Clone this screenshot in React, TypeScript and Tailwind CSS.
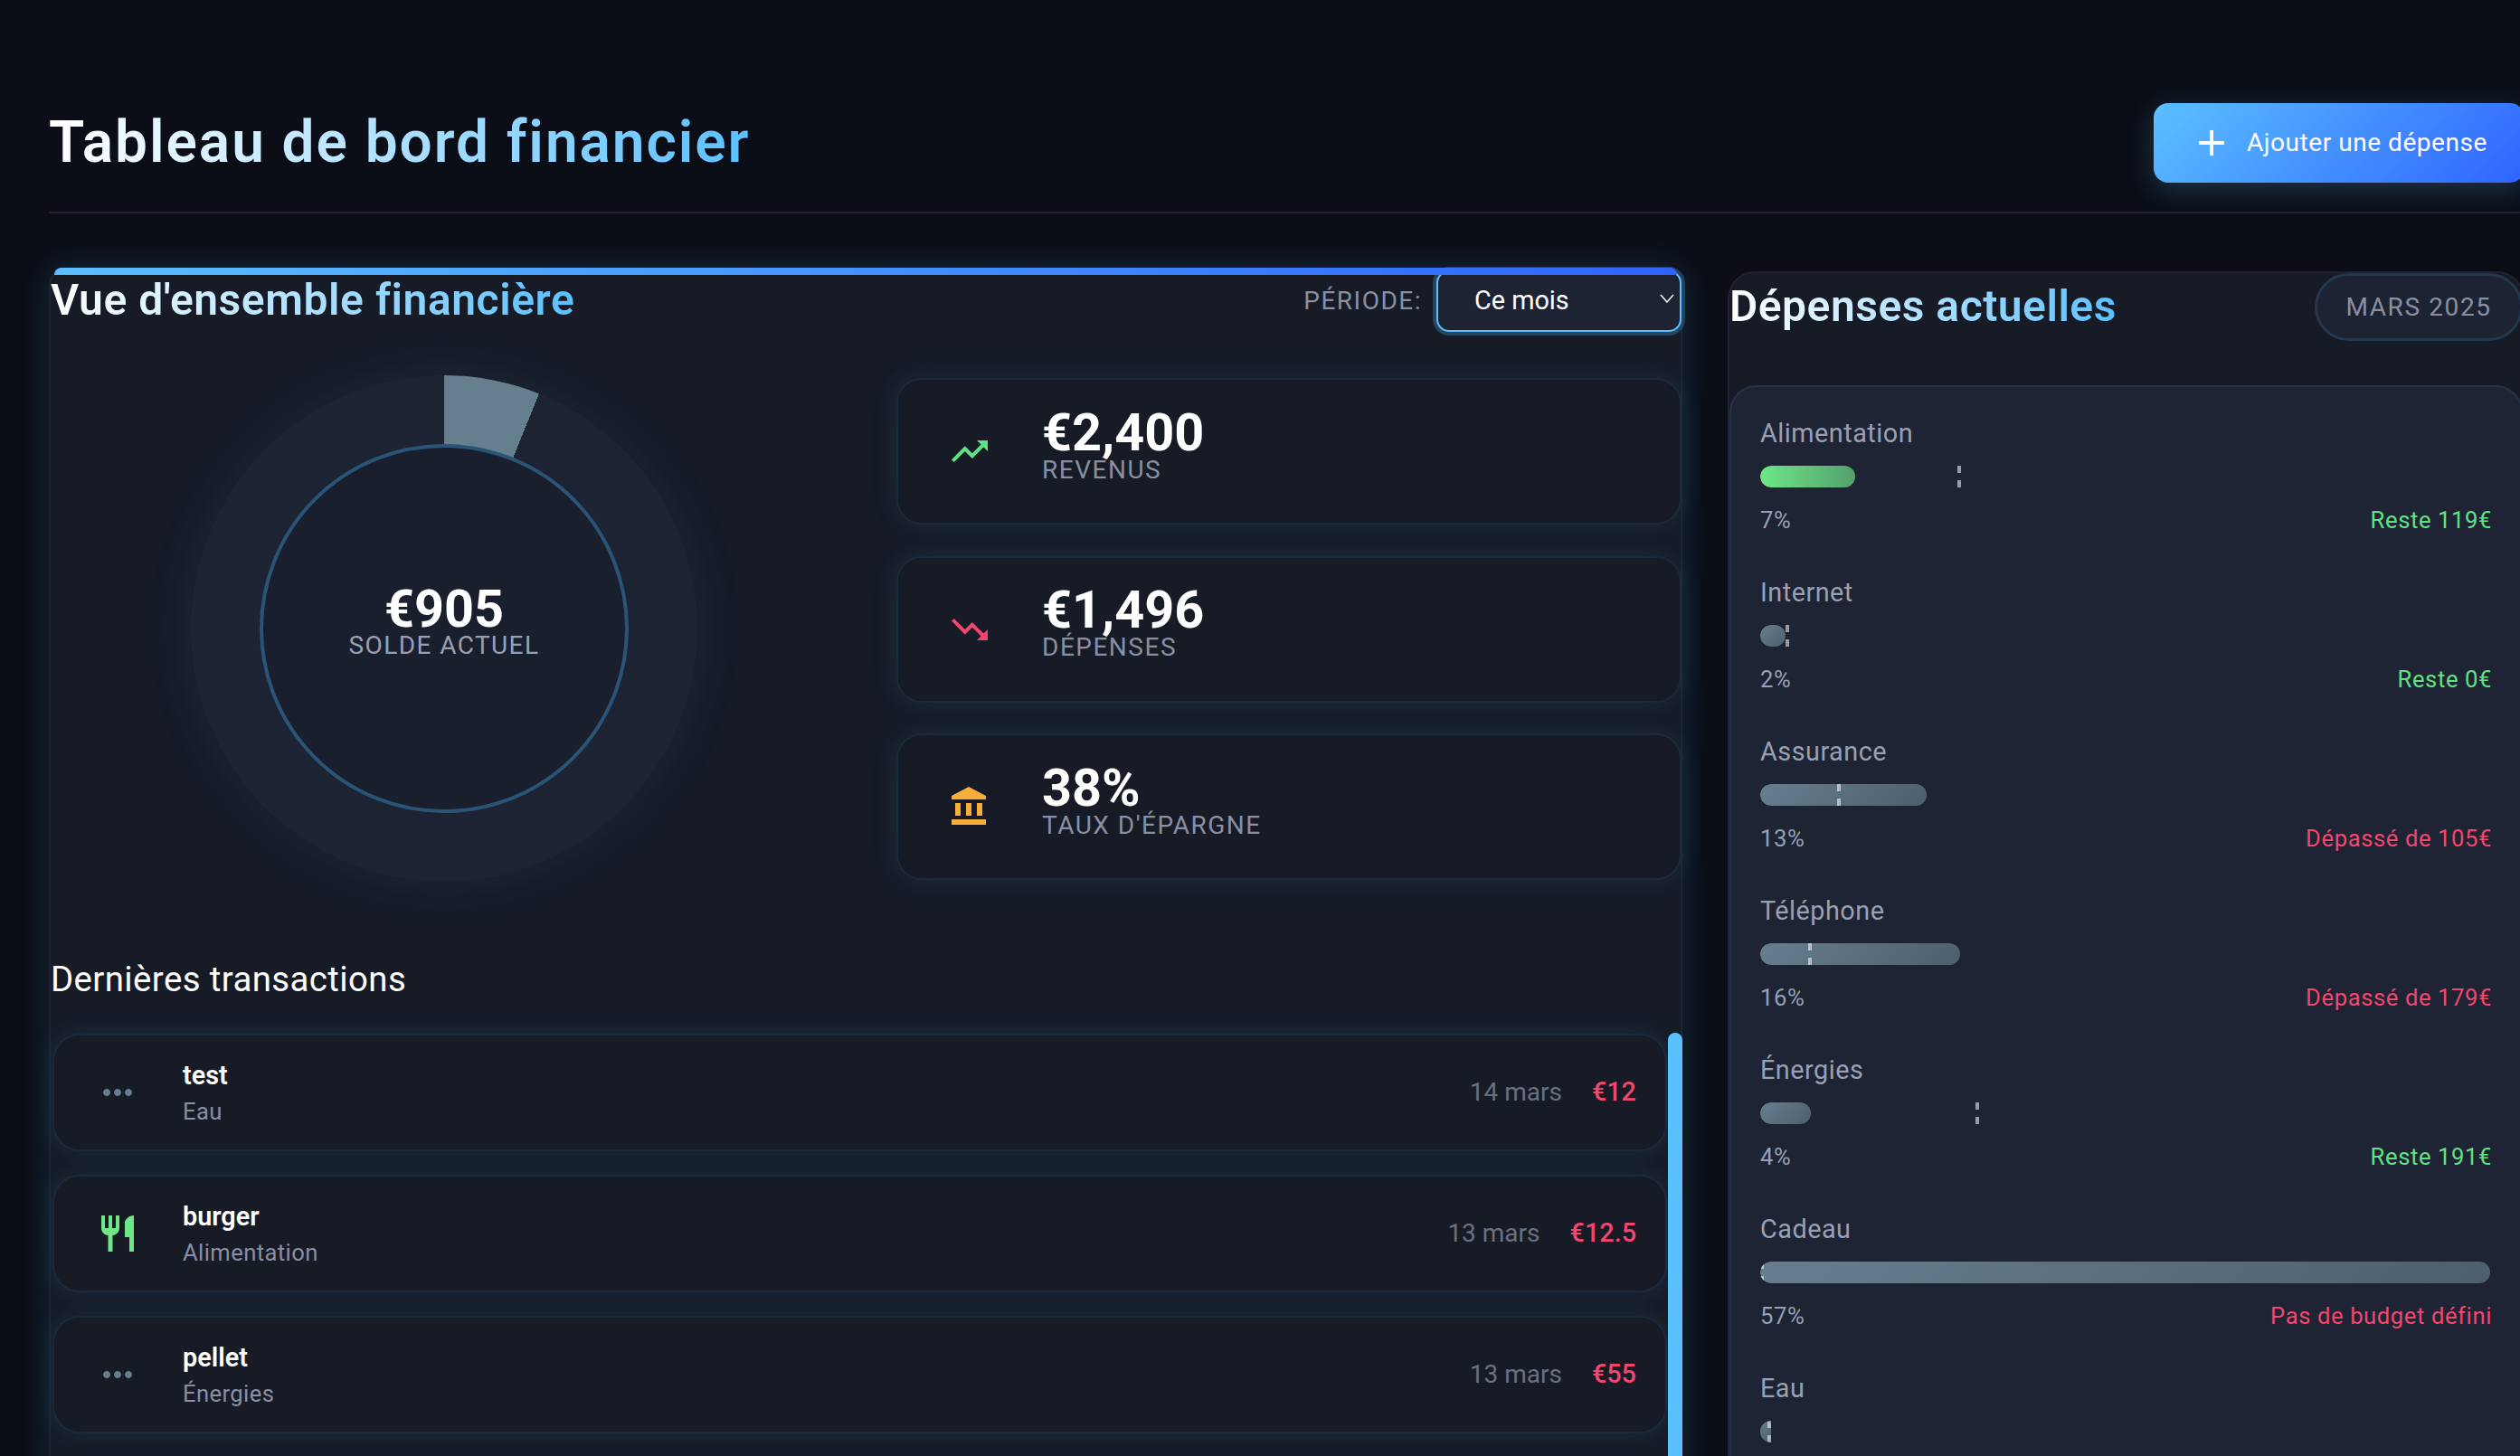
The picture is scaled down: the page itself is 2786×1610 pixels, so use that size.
import React from "react";

const P = {
  up: "M16 6l2.29 2.29-4.88 4.88-4-4L2 16.59 3.41 18l6-6 4 4 6.3-6.29L22 12V6z",
  down: "M16 18l2.29-2.29-4.88-4.88-4 4L2 7.41 3.41 6l6 6 4-4 6.3 6.29L22 12v6z",
  bank: "M4 10v7h3v-7H4zm6 0v7h3v-7h-3zM2 22h19v-3H2v3zm14-12v7h3v-7h-3zm-4.5-9L2 6v2h19V6l-9.5-5z",
  food: "M11 9H9V2H7v7H5V2H3v7c0 2.12 1.66 3.84 3.75 3.97V22h2.5v-9.03C11.34 12.84 13 11.12 13 9V2h-2v7zm5-3v8h2.5v8H21V2c-2.76 0-5 2.24-5 4z",
  more: "M6 10c-1.1 0-2 .9-2 2s.9 2 2 2 2-.9 2-2-.9-2-2-2zm12 0c-1.1 0-2 .9-2 2s.9 2 2 2 2-.9 2-2-.9-2-2-2zm-6 0c-1.1 0-2 .9-2 2s.9 2 2 2 2-.9 2-2-.9-2-2-2z",
  add: "M19 13h-6v6h-2v-6H5v-2h6V5h2v6h6v2z",
};

function Icon({ d, className }: { d: string; className: string }) {
  return (
    <svg viewBox="0 0 24 24" className={`h-12 w-12 shrink-0 fill-current ${className}`}>
      <path d={d} />
    </svg>
  );
}

const stats = [
  { icon: P.up, color: "text-[#62e085]", value: "€2,400", label: "REVENUS" },
  { icon: P.down, color: "text-[#f0476f]", value: "€1,496", label: "DÉPENSES" },
  { icon: P.bank, color: "text-[#f7ae3b]", value: "38%", label: "TAUX D'ÉPARGNE" },
];

const rows = [
  { icon: P.more, color: "text-[#667f8e]", name: "test", cat: "Eau", date: "14 mars", amount: "€12" },
  { icon: P.food, color: "text-[#6ee787]", name: "burger", cat: "Alimentation", date: "13 mars", amount: "€12.5" },
  { icon: P.more, color: "text-[#667f8e]", name: "pellet", cat: "Énergies", date: "13 mars", amount: "€55" },
];

const cats = [
  { name: "Alimentation", fill: 105, mark: 218, pct: "7%", note: "Reste 119€", good: true, green: true },
  { name: "Internet", fill: 28, mark: 28, pct: "2%", note: "Reste 0€", good: true },
  { name: "Assurance", fill: 184, mark: 85, pct: "13%", note: "Dépassé de 105€", good: false },
  { name: "Téléphone", fill: 221, mark: 53, pct: "16%", note: "Dépassé de 179€", good: false },
  { name: "Énergies", fill: 56, mark: 238, pct: "4%", note: "Reste 191€", good: true },
  { name: "Cadeau", fill: 807, mark: 0, pct: "57%", note: "Pas de budget défini", good: false },
  { name: "Eau", fill: 12, mark: 8, pct: "1%", note: "", good: true },
];

export default function App() {
  return (
    <div className="h-[1610px] w-[2786px] overflow-hidden bg-[#0b0e17] pl-[54px] pt-[114px] font-['Roboto',sans-serif] text-white">
      <div className="w-[2737px]">
        <header className="flex items-center justify-between border-b-2 border-[#241f35] pb-8">
          <h1 className="bg-[linear-gradient(90deg,#ffffff,#5bc0ff)] bg-clip-text text-[64px] leading-[88px] font-semibold tracking-[1.9px] text-transparent">
            Tableau de bord financier
          </h1>
          <button className="flex h-[88px] w-[410px] items-center gap-[16px] rounded-[16px] bg-[linear-gradient(135deg,#5bc0ff,#2f63ff)] pl-[46px] text-[28px] font-normal tracking-[0.55px] shadow-[0_8px_30px_rgba(91,192,255,0.22)]">
            <Icon d={P.add} className="-mx-[6px] text-white" />
            <span className="ml-[5px]">Ajouter une dépense</span>
          </button>
        </header>

        <div className="mt-[60px] flex items-start gap-[50px]">
          {/* Left panel */}
          <section className="relative h-[1400px] w-[1806px] shrink-0 rounded-[20px] border-2 border-t-0 border-[#1a2534] bg-[#161b26] shadow-[0_0_36px_rgba(91,192,255,0.16)]">
            <div className="absolute top-0 left-[4px] right-[4px] z-10 h-2 rounded-t-[14px] bg-[linear-gradient(90deg,#5bc0ff,#2f63ff)]" />
            <div className="flex h-[76px] items-start justify-between">
              <h2 className="mt-[8px] bg-[linear-gradient(90deg,#ffffff,#5bc0ff)] bg-clip-text text-[48px] leading-[56px] font-semibold tracking-[0.55px] text-transparent">
                Vue d'ensemble financière
              </h2>
              <div className="mt-[3px] -mr-[1px] flex items-center">
                <span className="mr-[16px] text-[28px] tracking-[1.5px] text-[#8a8fa3]">PÉRIODE:</span>
                <div className="relative flex h-[68px] w-[271px] items-center rounded-[14px] border-2 border-[#5bc0ff] bg-[#1d2333] pl-[40px] text-[28.8px] shadow-[0_0_0_4px_rgba(91,192,255,0.25)]">
                  Ce mois
                  <svg viewBox="0 0 16 10" className="absolute right-[6px] top-[24px] h-[10px] w-4 fill-none stroke-white stroke-[1.5]">
                    <path d="M1 1l7 8 7-8" />
                  </svg>
                </div>
              </div>
            </div>

            <div className="mt-[44px] grid grid-cols-[870px_868px] gap-x-[65px]">
              <div className="flex h-[558px] items-center justify-center">
                <div className="flex h-[560px] w-[560px] shrink-0 items-center justify-center rounded-full bg-[conic-gradient(#667f8e_0deg_22deg,#1c2332_22deg_360deg)] shadow-[0_0_56px_rgba(91,192,255,0.09)]">
                  <div className="flex h-[408px] w-[408px] flex-col items-center justify-center rounded-full border-4 border-[#2a5475] bg-[#191f2c] pb-[14px]">
                    <div className="text-[57.6px] leading-[56px] font-bold">€905</div>
                    <div className="-mt-[4px] text-[28px] leading-[32px] tracking-[1.4px] text-[#9aa0b4]">SOLDE ACTUEL</div>
                  </div>
                </div>
              </div>
              <div className="mt-[2px] flex flex-col gap-[34.5px]">
                {stats.map((s) => (
                  <div
                    key={s.label}
                    className="flex h-[162px] items-center gap-[56px] rounded-[28px] border-2 border-[#1b2a3b] bg-[#161b26] pl-[55px] shadow-[0_0_30px_rgba(91,192,255,0.11)]"
                  >
                    <Icon d={s.icon} className={s.color} />
                    <div className="pb-[12px]">
                      <div className="text-[57.6px] leading-[56px] font-bold">{s.value}</div>
                      <div className="-mt-[3px] text-[28px] leading-[32px] tracking-[1.5px] text-[#8a8fa3]">{s.label}</div>
                    </div>
                  </div>
                ))}
              </div>
            </div>

            <h3 className="mt-[88px] text-[38.4px] leading-[42px] font-normal tracking-[0.4px]">Dernières transactions</h3>

            <div className="relative mt-[39px]">
              <div className="flex w-[1787px] flex-col gap-[26px] pl-[2px]">
                {rows.map((r) => (
                  <div
                    key={r.name}
                    className="flex h-[130px] items-center rounded-[30px] border-2 border-[#1b2a3b] bg-[#161b26] pl-[46px] pr-[32px] shadow-[0_0_30px_rgba(91,192,255,0.11)]"
                  >
                    <Icon d={r.icon} className={r.color} />
                    <div className="ml-[48px] flex-1">
                      <div className="text-[28.8px] leading-[34px] font-semibold">{r.name}</div>
                      <div className="mt-[8px] text-[25.6px] leading-[30px] tracking-[0.4px] text-[#8a8fa3]">{r.cat}</div>
                    </div>
                    <div className="text-[28px] text-[#6b7080]">{r.date}</div>
                    <div className="ml-[33px] text-[28.8px] font-medium text-[#f0476f]">{r.amount}</div>
                  </div>
                ))}
              </div>
              <div className="absolute -right-[2px] top-[-1px] h-[600px] w-4 rounded-t-[8px] bg-[#5bc0ff]" />
            </div>
          </section>

          {/* Right panel */}
          <section className="mt-[4px] h-[1400px] w-[881px] shrink-0 rounded-[30px] border-2 border-[#241f35] border-b-0 bg-[#161b26]">
            <div className="flex h-[124px] items-start justify-between">
              <h2 className="mt-[9px] bg-[linear-gradient(90deg,#ffffff,#5bc0ff)] bg-clip-text text-[48px] leading-[56px] font-semibold tracking-[0.5px] text-transparent">
                Dépenses actuelles
              </h2>
              <div className="flex h-[75px] w-[230px] items-center justify-center rounded-full border-[3px] border-[#23374d] bg-[#1d2333] text-[28px] tracking-[1.6px] text-[#8a8fa3]">
                MARS 2025
              </div>
            </div>
            <div className="rounded-[30px] border-2 border-[#243347] bg-[#1e2433] px-[32px] pt-[34px]">
              {cats.map((c) => (
                <div key={c.name} className="h-[176px]">
                  <div className="text-[28.8px] leading-[34px] tracking-[0.5px] text-[#9aa0b4]">{c.name}</div>
                  <div className="relative mt-[19px] h-6 overflow-hidden rounded-full">
                    <div
                      className={`h-6 rounded-full ${c.green ? "bg-[linear-gradient(90deg,#6ee787,#54a06c)]" : "bg-[linear-gradient(135deg,#667f8e,#4d5f6e)]"}`}
                      style={{ width: c.fill }}
                    />
                    <div className="absolute top-0 flex h-6 w-1 flex-col justify-between" style={{ left: c.mark }}>
                      <div className="h-2 bg-white/55" />
                      <div className="h-2 bg-white/55" />
                    </div>
                  </div>
                  <div className="mt-[21px] flex justify-between text-[25.6px] leading-[30px] tracking-[0.6px]">
                    <span className="text-[#9aa0b4]">{c.pct}</span>
                    <span className={c.good ? "text-[#62e085]" : "text-[#f0476f]"}>{c.note}</span>
                  </div>
                </div>
              ))}
            </div>
          </section>
        </div>
      </div>
    </div>
  );
}
